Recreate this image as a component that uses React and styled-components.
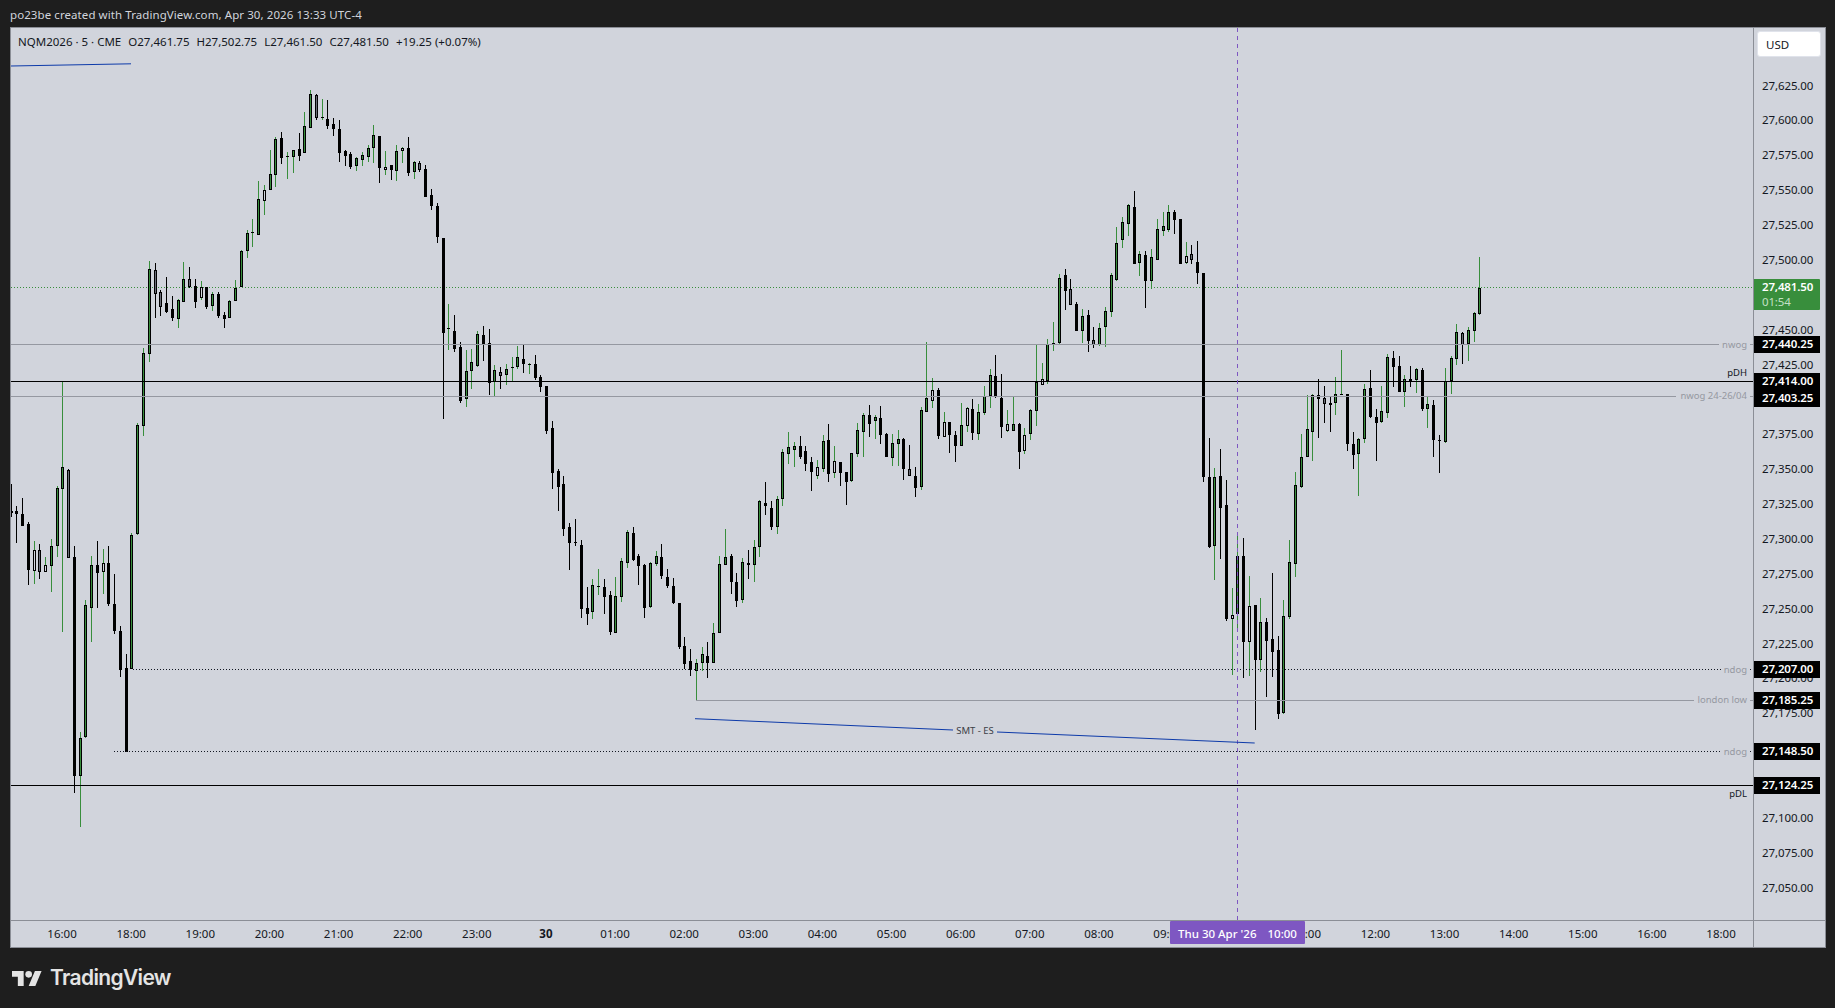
import React from 'react';
import styled, { createGlobalStyle } from 'styled-components';

// bars as [high, bodyTop, bodyBottom, low, kind], values are y pixels on the page
// kind: u = up, d = down, h = up with pale centre, m = down with grey centre
const BARS = [
  [484,511,513,517,'d'],[506,511,514,543,'d'],[498,514,526,526,'d'],[522,524,570,585,'d'],[541,550,571,584,'h'],
  [544,550,572,579,'m'],[557,565,572,572,'h'],[539,546,566,592,'u'],[486,488,546,557,'u'],[381,467,489,632,'u'],
  [469,470,558,558,'m'],[546,557,776,793,'d'],[732,738,776,827,'u'],[600,605,737,738,'u'],[556,565,608,642,'u'],
  [541,565,573,608,'d'],[549,563,572,594,'h'],[546,563,604,606,'d'],[574,604,631,634,'d'],[626,631,670,677,'d'],
  [654,668,752,752,'d'],[533,535,669,669,'u'],[423,425,534,535,'u'],[348,353,426,436,'u'],[261,269,354,362,'u'],
  [263,270,294,318,'m'],[290,292,307,316,'m'],[277,303,312,313,'d'],[296,309,318,321,'d'],[299,300,319,328,'u'],
  [262,279,302,302,'u'],[267,279,287,288,'m'],[279,286,302,308,'d'],[281,287,298,300,'h'],[287,287,307,309,'d'],
  [292,294,306,311,'u'],[292,294,316,318,'d'],[312,315,319,328,'d'],[300,301,318,318,'u'],[280,288,301,301,'u'],
  [250,251,287,287,'u'],[230,233,251,258,'u'],[219,232,232,247,'u'],[181,199,235,235,'u'],[185,190,201,215,'h'],
  [150,174,190,190,'u'],[137,139,175,187,'u'],[132,138,158,164,'d'],[152,156,156,179,'u'],[150,150,157,173,'u'],
  [133,149,156,161,'d'],[112,126,153,153,'u'],[90,94,128,128,'u'],[94,95,118,120,'m'],[99,117,117,120,'u'],
  [100,119,126,129,'d'],[118,124,129,136,'d'],[120,129,153,162,'d'],[150,151,156,166,'d'],[152,154,167,169,'d'],
  [157,158,166,171,'u'],[152,155,160,166,'u'],[145,148,157,162,'u'],[125,135,148,163,'u'],[136,136,168,183,'d'],
  [151,167,170,175,'h'],[165,165,170,180,'d'],[145,151,171,181,'u'],[147,148,151,163,'h'],[137,148,173,176,'d'],
  [161,162,172,179,'u'],[161,163,170,172,'m'],[165,169,197,197,'d'],[189,195,206,210,'d'],[203,206,237,243,'d'],
  [238,238,333,419,'d'],[304,328,328,350,'u'],[315,331,349,352,'d'],[342,347,401,403,'d'],[350,371,399,407,'u'],
  [349,362,371,389,'u'],[331,334,366,367,'u'],[326,335,344,361,'d'],[329,343,383,395,'d'],[365,370,382,397,'u'],
  [367,372,376,389,'m'],[364,369,375,385,'u'],[357,367,367,382,'u'],[346,357,367,369,'u'],[344,359,364,373,'d'],
  [363,364,364,374,'u'],[355,364,378,380,'d'],[375,377,387,392,'d'],[386,386,431,434,'d'],[421,428,473,489,'d'],
  [469,471,487,511,'d'],[476,484,529,536,'d'],[523,527,543,570,'d'],[519,542,542,546,'d'],[540,545,609,618,'d'],
  [587,608,614,625,'d'],[579,585,612,619,'u'],[569,586,586,595,'u'],[579,587,597,614,'d'],[591,595,632,635,'d'],
  [577,596,633,633,'u'],[558,561,597,602,'u'],[530,532,563,568,'u'],[527,533,560,561,'d'],[554,556,566,585,'d'],
  [564,565,608,618,'d'],[562,563,607,608,'u'],[551,556,564,566,'u'],[544,557,576,579,'d'],[569,577,586,588,'d'],
  [578,586,603,604,'d'],[603,603,647,649,'d'],[637,646,664,669,'d'],[649,661,670,676,'d'],[659,663,671,700,'u'],
  [647,654,663,671,'u'],[642,656,663,678,'d'],[623,633,663,663,'u'],[556,564,633,633,'u'],[529,557,565,565,'u'],
  [554,556,582,594,'d'],[573,582,601,607,'d'],[558,562,600,603,'u'],[550,563,565,579,'d'],[540,547,565,582,'u'],
  [500,501,547,557,'u'],[482,503,506,515,'d'],[501,508,527,530,'d'],[496,499,527,534,'u'],[449,452,499,506,'u'],
  [432,447,454,464,'u'],[442,446,450,467,'u'],[436,446,457,459,'d'],[446,451,464,471,'d'],[457,462,472,491,'d'],
  [460,467,476,479,'h'],[435,441,469,472,'u'],[424,440,474,482,'d'],[446,461,473,478,'h'],[462,462,473,486,'d'],
  [472,472,482,505,'d'],[453,453,481,482,'u'],[423,430,454,457,'u'],[413,415,432,457,'u'],[405,415,424,437,'d'],
  [415,417,421,439,'u'],[406,418,435,444,'d'],[433,434,457,457,'d'],[434,443,458,466,'u'],[430,439,444,466,'u'],
  [438,439,469,480,'d'],[445,469,476,476,'m'],[467,476,488,497,'d'],[407,410,487,490,'u'],[342,398,412,412,'u'],
  [378,390,401,408,'h'],[388,390,436,439,'d'],[412,422,437,437,'h'],[422,422,435,453,'d'],[431,435,446,462,'d'],
  [403,425,446,446,'u'],[407,408,426,432,'h'],[399,409,433,440,'d'],[404,412,434,440,'u'],[386,396,413,415,'u'],
  [369,375,396,408,'u'],[355,376,397,398,'d'],[374,398,427,438,'d'],[410,424,431,432,'h'],[397,424,431,431,'u'],
  [423,424,452,469,'d'],[428,435,451,454,'h'],[409,410,434,440,'u'],[344,382,411,426,'u'],[363,379,385,385,'h'],
  [339,344,381,384,'u'],[322,343,343,351,'u'],[274,278,343,345,'u'],[269,275,291,310,'d'],[279,289,305,305,'m'],
  [302,304,331,331,'d'],[309,316,331,343,'u'],[310,315,341,352,'d'],[327,340,345,348,'m'],[323,328,345,346,'u'],
  [307,311,327,347,'u'],[273,275,312,317,'u'],[227,243,280,281,'u'],[217,222,240,248,'u'],[204,205,224,236,'u'],
  [191,207,264,264,'d'],[251,254,263,276,'u'],[251,255,281,308,'d'],[249,257,281,289,'u'],[219,229,260,260,'u'],
  [212,226,231,236,'u'],[205,212,230,232,'u'],[210,212,220,234,'d'],[219,219,264,264,'d'],[242,256,263,264,'h'],
  [245,254,260,264,'m'],[241,262,273,284,'d'],[273,273,477,482,'d'],[438,477,547,548,'d'],[468,477,546,580,'u'],
  [449,476,508,559,'d'],[480,505,619,621,'d'],[588,615,619,675,'h'],[535,556,614,629,'u'],[538,556,642,678,'d'],
  [576,606,642,676,'h'],[605,605,660,730,'d'],[598,622,660,672,'u'],[618,622,641,697,'d'],[573,639,652,677,'d'],
  [636,650,714,719,'d'],[600,616,713,714,'u'],[540,562,617,619,'u'],[472,485,564,577,'u'],[434,457,487,488,'u'],
  [395,429,457,457,'u'],[394,395,432,461,'u'],[379,395,399,438,'d'],[386,398,404,423,'m'],[397,403,405,432,'d'],
  [377,394,403,415,'u'],[350,394,394,395,'u'],[394,394,444,451,'d'],[432,444,455,469,'d'],[438,439,454,496,'u'],
  [384,389,439,443,'u'],[370,388,417,418,'d'],[409,417,423,461,'d'],[386,411,422,423,'u'],[354,357,413,418,'u'],
  [351,358,367,387,'d'],[356,366,392,392,'d'],[375,379,392,407,'u'],[366,379,381,387,'d'],[368,369,380,393,'u'],
  [368,370,409,411,'d'],[397,404,409,428,'u'],[400,405,440,457,'d'],[435,440,440,473,'d'],[368,381,442,443,'u'],
  [356,358,381,394,'u'],[324,332,359,365,'u'],[332,333,345,364,'m'],[327,330,344,361,'u'],[312,313,331,342,'u'],
  [257,288,314,315,'u'],
];

const GREEN = '#388e3c';
const GREY = '#9598a1';
const PURPLE = '#7e57c2';
const CENTRE = { u: GREEN, d: '#000', h: '#d1d4dc', m: '#6a6d78' };

const barX = (i) => Math.round(10.5 + 5.76 * i);

const TICKS = [];
for (let p = 27625; p >= 27050; p -= 25) TICKS.push(p.toLocaleString('en-US', { minimumFractionDigits: 2 }));

const HOURS = ['16:00','18:00','19:00','20:00','21:00','22:00','23:00','30','01:00','02:00','03:00','04:00','05:00','06:00','07:00','08:00','09:00','10:00','11:00','12:00','13:00','14:00','15:00','16:00','18:00'];

const LEVELS = [
  { top: 336, price: '27,440.25' },
  { top: 373, price: '27,414.00' },
  { top: 390, price: '27,403.25' },
  { top: 661, price: '27,207.00' },
  { top: 692, price: '27,185.25' },
  { top: 743, price: '27,148.50' },
  { top: 777, price: '27,124.25' },
];

// y, start, where the line stops before its label, colour, dash, label, label y
const LINES = [
  { y: 344, x1: 11, x2: 1719, color: GREY, label: 'nwog', ly: 345 },
  { y: 396, x1: 11, x2: 1676, color: GREY, label: 'nwog 24-26/04', ly: 396 },
  { y: 669, x1: 133, x2: 1722, color: '#131722', dash: '1 2', label: 'ndog', ly: 670 },
  { y: 700, x1: 696, x2: 1694, color: GREY, label: 'london low', ly: 700 },
  { y: 751, x1: 114, x2: 1720, color: '#131722', dash: '1 2', label: 'ndog', ly: 752 },
];

const GlobalStyle = createGlobalStyle`
  html, body {
    margin: 0;
    padding: 0;
    background: #1e1e1e;
  }
`;

const Page = styled.div`
  width: 1835px;
  height: 1008px;
  overflow: hidden;
  font-family: "Noto Sans", sans-serif;
  font-size: 12px;
  color: #131722;
`;

const Header = styled.div`
  height: 27px;
  line-height: 30px;
  padding-left: 10px;
  color: #d1d4dc;
  font-size: 11.5px;
  letter-spacing: 0.08px;
  white-space: nowrap;
`;

const Frame = styled.div`
  display: grid;
  grid-template-columns: 1742px 72px;
  grid-template-rows: 892px 27px;
  width: 1814px;
  margin-left: 10px;
  background: #d1d4dc;
  border: 1px solid #8b8e96;
`;

const Pane = styled.div`
  position: relative;
  overflow: hidden;
`;

const ChartSvg = styled.svg`
  display: block;
  width: 100%;
  height: 100%;
`;

const Legend = styled.div`
  position: absolute;
  top: 6px;
  left: 7px;
  display: flex;
  gap: 7px;
  font-size: 11.5px;
  line-height: 16px;
  white-space: nowrap;
`;

const LineLabel = styled.text`
  font-family: "Noto Sans", sans-serif;
  font-size: 9.5px;
  text-anchor: ${(p) => p.$anchor || 'end'};
  dominant-baseline: middle;
  fill: ${(p) => p.$color || GREY};
`;

const PriceAxis = styled.div`
  position: relative;
  display: flex;
  flex-direction: column;
  padding-top: 40.5px;
  border-left: 1px solid #8b8e96;
  overflow: hidden;
`;

const Tick = styled.div`
  flex: 0 0 34.875px;
  line-height: 34.875px;
  padding-left: 8px;
  letter-spacing: -0.1px;
  font-size: 11.5px;
`;

const UnitButton = styled.div`
  position: absolute;
  top: 3px;
  left: 3px;
  width: 54px;
  height: 24px;
  padding-left: 8px;
  line-height: 25px;
  background: #fff;
  border: 1px solid #e0e3eb;
  border-radius: 3px;
  font-size: 11.5px;
`;

const LevelBadge = styled.div`
  position: absolute;
  left: 0;
  width: 66px;
  height: 17px;
  padding-left: 8px;
  box-sizing: border-box;
  line-height: 16px;
  background: #000;
  color: #fff;
  font-size: 11.5px;
  font-weight: 600;
  letter-spacing: -0.15px;
`;

const LastBadge = styled.div`
  position: absolute;
  top: 251px;
  left: 0;
  width: 66px;
  height: 31px;
  padding-left: 8px;
  box-sizing: border-box;
  background: ${GREEN};
  color: #fff;
  font-size: 11.5px;
  font-weight: 600;
  line-height: 15px;
  letter-spacing: -0.15px;
  border-radius: 0 1px 1px 0;
`;

const Countdown = styled.div`
  color: #c3e0c5;
  font-weight: 400;
`;

const TimeAxis = styled.div`
  position: relative;
  display: flex;
  padding-left: 16.5px;
  border-top: 1px solid #8b8e96;
  overflow: hidden;
`;

const TimeTick = styled.div`
  flex: 0 0 69.13px;
  text-align: center;
  line-height: 26px;
  font-size: 11.5px;
  font-weight: ${(p) => (p.$bold ? 700 : 400)};
`;

const CursorLabel = styled.div`
  position: absolute;
  top: 0;
  left: 1159px;
  width: 135px;
  height: 23px;
  background: ${PURPLE};
  color: #fff;
  border-radius: 1px;
  display: flex;
  justify-content: center;
  gap: 11px;
  line-height: 25px;
  font-size: 11.5px;
  font-weight: 500;
`;

const AxisCorner = styled.div`
  border-top: 1px solid #8b8e96;
  border-left: 1px solid #8b8e96;
`;

const Footer = styled.div`
  display: flex;
  align-items: center;
  gap: 8px;
  padding: 19px 0 0 12px;
  color: #e4e4e4;
`;

const Wordmark = styled.span`
  font-family: Inter, sans-serif;
  font-size: 21px;
  font-weight: 600;
  line-height: 22px;
  letter-spacing: -0.65px;
`;

const Candle = ({ bar, x }) => {
  const [hi, top, bottom, lo, kind] = bar;
  const up = kind === 'u' || kind === 'h';
  const h = Math.max(1, bottom - top);
  return (
    <g>
      <rect x={x} y={hi} width="1" height={lo - hi} fill={up ? GREEN : '#000'} />
      <rect x={x - 1} y={top} width="3" height={h} fill="#000" />
      {h > 2 && <rect x={x} y={top + 1} width="1" height={h - 2} fill={CENTRE[kind]} />}
    </g>
  );
};

const Chart = () => (
  <ChartSvg viewBox="11 28 1742 892">
    <line x1="11" x2="1753" y1="287.5" y2="287.5" stroke={GREEN} strokeDasharray="1 2" shapeRendering="crispEdges" />
    <g shapeRendering="crispEdges">
      {BARS.map((bar, i) => <Candle key={i} bar={bar} x={barX(i)} />)}
      {LINES.map((l, i) => (
        <g key={i} stroke={l.color} strokeDasharray={l.dash}>
          <line x1={l.x1} x2={l.x2} y1={l.y + 0.5} y2={l.y + 0.5} />
          <line x1="1750" x2="1753" y1={l.y + 0.5} y2={l.y + 0.5} />
        </g>
      ))}
      <line x1="11" x2="1753" y1="381" y2="381" stroke="#000" strokeWidth="1" />
      <line x1="11" x2="1753" y1="785" y2="785" stroke="#000" strokeWidth="1" />
      <line x1="1237.5" x2="1237.5" y1="28" y2="920" stroke={PURPLE} strokeDasharray="4 4" />
    </g>
    <line x1="11" y1="66" x2="131" y2="63.8" stroke="#0d3aa9" />
    <line x1="695" y1="718.7" x2="953" y2="730" stroke="#0d3aa9" />
    <line x1="997" y1="732" x2="1254.7" y2="743" stroke="#0d3aa9" />
    {LINES.map((l, i) => <LineLabel key={i} x="1747" y={l.ly}>{l.label}</LineLabel>)}
    <LineLabel x="1747" y="373" $color="#131722">pDH</LineLabel>
    <LineLabel x="1747" y="794" $color="#131722">pDL</LineLabel>
    <LineLabel x="975" y="731" $anchor="middle" $color="#3c3f48">SMT - ES</LineLabel>
  </ChartSvg>
);

const Logo = () => (
  <svg width="30" height="15" viewBox="0 4 36 18" fill="currentColor">
    <path d="M14 22H7V11H0V4h14v18zM28 22h-8l7.5-18h8L28 22z" />
    <circle cx="20" cy="8" r="4" />
  </svg>
);

const App = () => (
  <Page>
    <GlobalStyle />
    <Header>po23be created with TradingView.com, Apr 30, 2026 13:33 UTC-4</Header>
    <Frame>
      <Pane>
        <Chart />
        <Legend>
          <span>NQM2026 · 5 · CME</span>
          <span>O27,461.75</span>
          <span>H27,502.75</span>
          <span>L27,461.50</span>
          <span>C27,481.50</span>
          <span>+19.25 (+0.07%)</span>
        </Legend>
      </Pane>
      <PriceAxis>
        {TICKS.map((t) => <Tick key={t}>{t}</Tick>)}
        <UnitButton>USD</UnitButton>
        <LastBadge>
          27,481.50
          <Countdown>01:54</Countdown>
        </LastBadge>
        {LEVELS.map((l) => (
          <LevelBadge key={l.price} style={{ top: l.top - 28 }}>{l.price}</LevelBadge>
        ))}
      </PriceAxis>
      <TimeAxis>
        {HOURS.map((h, i) => <TimeTick key={i} $bold={h === '30'}>{h}</TimeTick>)}
        <CursorLabel>
          <span>Thu 30 Apr '26</span>
          <span>10:00</span>
        </CursorLabel>
      </TimeAxis>
      <AxisCorner />
    </Frame>
    <Footer>
      <Logo />
      <Wordmark>TradingView</Wordmark>
    </Footer>
  </Page>
);

export default App;
